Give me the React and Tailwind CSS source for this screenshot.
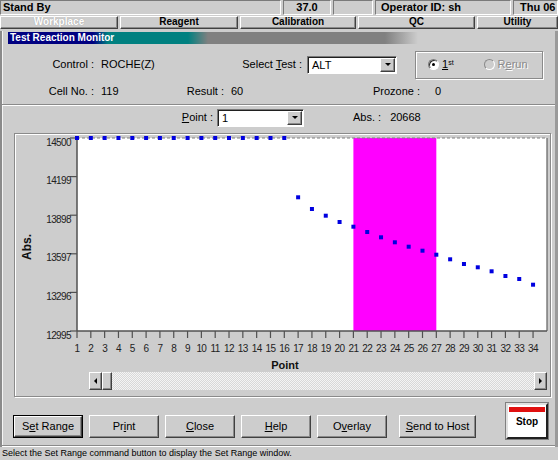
import React from "react";

const sunken = "border border-t-[#7a7a7a] border-l-[#7a7a7a] border-b-white border-r-white";
const raised = "border border-t-white border-l-white border-b-[#404040] border-r-[#404040] shadow-[inset_-1px_-1px_0_#8a8a8a]";

const px = (i) => 62 + (i - 1) * 13.82;
const tickY = [4, 42.6, 81.2, 119.8, 158.4, 197];
const yLabels = ["14500", "14199", "13898", "13597", "13296", "12995"];
const lowPts = [63.3, 75, 81.7, 88, 92.7, 98, 103.3, 108.3, 112.7, 116.7, 120.7, 125.3, 130, 133.3, 137.3, 142, 145, 150.7];

function Chart() {
  const pts = [];
  for (let i = 1; i <= 16; i++) pts.push([px(i), 4]);
  lowPts.forEach((y, k) => pts.push([px(17 + k), y]));
  return (
    <svg width="535" height="238" className="block">
      <rect x="62" y="4" width="470" height="193" fill="#ffffff" />
      <rect x={px(21)} y="4" width={px(27) - px(21)} height="193" fill="#ff00ff" />
      <line x1="62" y1="4" x2="532" y2="4" stroke="#808080" strokeWidth="1" strokeDasharray="3 2" />
      <line x1="532" y1="4" x2="532" y2="197" stroke="#606060" strokeWidth="1.2" />
      <line x1="62" y1="3" x2="62" y2="197" stroke="#505050" strokeWidth="1.5" />
      <line x1="62" y1="197" x2="532" y2="197" stroke="#505050" strokeWidth="1.5" />
      {tickY.map((y, k) => (
        <g key={k}>
          <line x1="55" y1={y} x2="62" y2={y} stroke="#505050" strokeWidth="1.2" />
          <text x="56" y={y + 7.5} textAnchor="end" fontSize="10" fill="#222" fontFamily="Liberation Sans, sans-serif" letterSpacing="-0.6">
            {yLabels[k]}
          </text>
        </g>
      ))}
      {Array.from({ length: 34 }, (_, k) => (
        <g key={k}>
          <line x1={px(k + 1)} y1="197" x2={px(k + 1)} y2="204" stroke="#505050" strokeWidth="1.2" />
          <text x={px(k + 1)} y="218" textAnchor="middle" fontSize="10" fill="#222" fontFamily="Liberation Sans, sans-serif" letterSpacing="-0.6">
            {k + 1}
          </text>
        </g>
      ))}
      {pts.map(([x, y], k) => (
        <rect key={k} x={x - 2} y={y - 2} width="4" height="4" fill="#0000e0" />
      ))}
      <text x="270" y="235" textAnchor="middle" fontSize="11" fontWeight="bold" fill="#111" fontFamily="Liberation Sans, sans-serif">
        Point
      </text>
      <text transform="translate(16 113) rotate(-90)" textAnchor="middle" fontSize="12" fontWeight="bold" fill="#111" fontFamily="Liberation Sans, sans-serif">
        Abs.
      </text>
    </svg>
  );
}

function Combo({ w, value }) {
  return (
    <div className={`${w} h-[18px] bg-white flex border border-t-[#7a7a7a] border-l-[#7a7a7a] border-b-white border-r-white shadow-[inset_1px_1px_0_#202020]`}>
      <div className="flex-1 pl-[4px] pt-[1px] leading-[15px]">{value}</div>
      <div className={`w-[15px] mt-[1px] mb-[1px] mr-[1px] bg-[#cccccc] flex items-center justify-center ${raised}`}>
        <div className="w-0 h-0 border-l-[3px] border-r-[3px] border-t-[3px] border-l-transparent border-r-transparent border-t-black" />
      </div>
    </div>
  );
}

function Btn({ w, focused, children }) {
  return (
    <div className={`${w} h-[23px] flex items-center justify-center ${focused ? "border border-black p-0" : ""}`}>
      <div className={`w-full h-full flex items-center justify-center ${raised}`}>{children}</div>
    </div>
  );
}

export default function App() {
  return (
    <div className="w-[558px] h-[464px] bg-white overflow-hidden font-['Liberation_Sans',sans-serif] text-[11px] text-black">
      <div className="h-[460px] bg-[#cdcdcd] flex flex-col">
        {/* top status line */}
        <div className="flex h-[16px] font-bold text-[11px] leading-none whitespace-nowrap">
          <div className={`w-[281px] pl-[2px] flex items-center ${sunken}`}>Stand By</div>
          <div className={`ml-[2px] w-[48px] flex items-center justify-center ${sunken}`}>37.0</div>
          <div className={`ml-[2px] w-[40px] ${sunken}`} />
          <div className={`ml-[2px] w-[136px] pl-[5px] flex items-center ${sunken}`}>Operator ID: sh</div>
          <div className={`ml-[2px] flex-1 pl-[6px] flex items-center overflow-hidden ${sunken}`}>Thu 06</div>
        </div>
        {/* tabs */}
        <div className="flex h-[14px] mt-[1px] font-bold text-[10px] leading-none whitespace-nowrap">
          <div className={`w-[118px] flex items-center justify-center text-white [text-shadow:0_0_1px_#999] ${raised}`}>Workplace</div>
          <div className={`ml-[2px] w-[118px] flex items-center justify-center ${raised}`}>Reagent</div>
          <div className={`ml-[2px] w-[116px] flex items-center justify-center ${raised}`}>Calibration</div>
          <div className={`ml-[2px] w-[117px] flex items-center justify-center ${raised}`}>QC</div>
          <div className={`ml-[2px] flex-1 flex items-center justify-center ${raised}`}>Utility</div>
        </div>
        {/* window */}
        <div className="flex-1 flex flex-col mt-[2px] border-l-[2px] border-l-[#8a8a8a] border-r-[3px] border-r-[#9a9a9a] shadow-[inset_1px_0_0_#f4f4f4]">
          <div className="ml-[6px] mt-[1px] w-[410px] h-[12px] flex items-center pl-[2px] text-white font-bold text-[10px] leading-none bg-[linear-gradient(90deg,#000080_0px,#000080_85px,#008080_100px,#008080_180px,#808080_200px,#808080_377px,#a8a8a8_395px,#cdcdcd_410px)]">
            Test Reaction Monitor
          </div>
          {/* row 1 */}
          <div className="mt-[3px] h-[35px] flex items-center">
            <span className="w-[92px] text-right">Control :</span>
            <span className="w-[144px] pl-[7px]">ROCHE(Z)</span>
            <span className="w-[64px] text-right whitespace-nowrap">
              Select <u>T</u>est :
            </span>
            <div className="ml-[5px]">
              <Combo w="w-[90px]" value="ALT" />
            </div>
            <div className="ml-[18px] w-[128px] h-[28px] border border-[#8a8a8a] shadow-[1px_1px_0_#fff,inset_1px_1px_0_#fff] flex items-center">
              <div className="ml-[12px] w-[11px] h-[11px] rounded-full bg-white border border-t-[#7a7a7a] border-l-[#7a7a7a] border-b-white border-r-white shadow-[inset_1px_1px_0_#303030] flex items-center justify-center">
                <div className="w-[3px] h-[3px] rounded-full bg-black" />
              </div>
              <span className="ml-[3px] text-[11px] leading-none">
                <u>1</u>
                <sup className="text-[7px]">st</sup>
              </span>
              <div className="ml-[30px] w-[11px] h-[11px] rounded-full bg-[#cdcdcd] border border-t-[#8a8a8a] border-l-[#8a8a8a] border-b-white border-r-white" />
              <span className="ml-[3px] text-[#8a8a8a] [text-shadow:1px_1px_0_#fff]">
                R<u>e</u>run
              </span>
            </div>
          </div>
          {/* row 2 */}
          <div className="h-[18px] flex items-center">
            <span className="w-[92px] text-right">Cell No. :</span>
            <span className="w-[91px] pl-[7px]">119</span>
            <span className="w-[39px] text-right">Result :</span>
            <span className="w-[146px] pl-[7px]">60</span>
            <span className="w-[50px] text-right">Prozone :</span>
            <span className="pl-[15px]">0</span>
          </div>
          {/* separator */}
          <div className="mt-[4px] h-[2px] border-t border-t-[#8a8a8a] border-b border-b-white" />
          {/* row 3 */}
          <div className="mt-[2px] h-[19px] flex items-center">
            <span className="w-[211px] text-right">
              <u>P</u>oint :
            </span>
            <div className="ml-[4px]">
              <Combo w="w-[87px]" value="1" />
            </div>
            <span className="ml-[49px]">Abs. :</span>
            <span className="ml-[9px]">20668</span>
          </div>
          {/* chart frame */}
          <div className="mt-[6px] ml-[12px] w-[537px] h-[264px] border border-[#8a8a8a] shadow-[inset_1px_1px_0_#fff,1px_1px_0_#fff] flex flex-col">
            <Chart />
            <div className="ml-[74px] w-[458px] h-[18px] flex">
              <div className={`w-[13px] flex items-center justify-center ${raised}`}>
                <div className="w-0 h-0 border-t-[3px] border-b-[3px] border-r-[3px] border-t-transparent border-b-transparent border-r-black" />
              </div>
              <div className={`w-[10px] ${raised}`} />
              <div className="flex-1 bg-[repeating-conic-gradient(#d8d8d8_0%_25%,#f4f4f4_0%_50%)] bg-[length:2px_2px]" />
              <div className={`w-[13px] flex items-center justify-center ${raised}`}>
                <div className="w-0 h-0 border-t-[3px] border-b-[3px] border-l-[3px] border-t-transparent border-b-transparent border-l-black" />
              </div>
            </div>
          </div>
          {/* buttons */}
          <div className="mt-[5px] h-[37px] flex items-end">
            <div className="ml-[11px] flex items-end mb-[1px] gap-[6px]">
              <Btn w="w-[70px]" focused>
                S<u>e</u>t Range
              </Btn>
              <Btn w="w-[70px]">
                Pr<u>i</u>nt
              </Btn>
              <Btn w="w-[70px]">
                <u>C</u>lose
              </Btn>
              <Btn w="w-[70px]">
                <u>H</u>elp
              </Btn>
              <Btn w="w-[70px]">
                O<u>v</u>erlay
              </Btn>
            </div>
            <div className="ml-[12px] mb-[1px]">
              <Btn w="w-[77px]">
                <u>S</u>end to Host
              </Btn>
            </div>
            <div className="ml-[30px] w-[42px] h-[36px] bg-white border-2 border-t-[#e0e0e0] border-l-[#e0e0e0] border-b-[#202020] border-r-[#202020] shadow-[0_0_0_1px_#808080] flex flex-col items-center">
              <div className="mt-[2px] w-[36px] h-[5px] bg-[#e01010]" />
              <div className="mt-[5px] font-bold text-[10px] leading-none">Stop</div>
            </div>
          </div>
          <div className="mt-[6px] h-[2px] border-t border-t-[#8a8a8a] border-b border-b-white" />
        </div>
        {/* status bar */}
        <div className="h-[13px] pl-[2px] text-[9px] leading-[13px] whitespace-nowrap">
          Select the Set Range command button to display the Set Range window.
        </div>
      </div>
    </div>
  );
}
